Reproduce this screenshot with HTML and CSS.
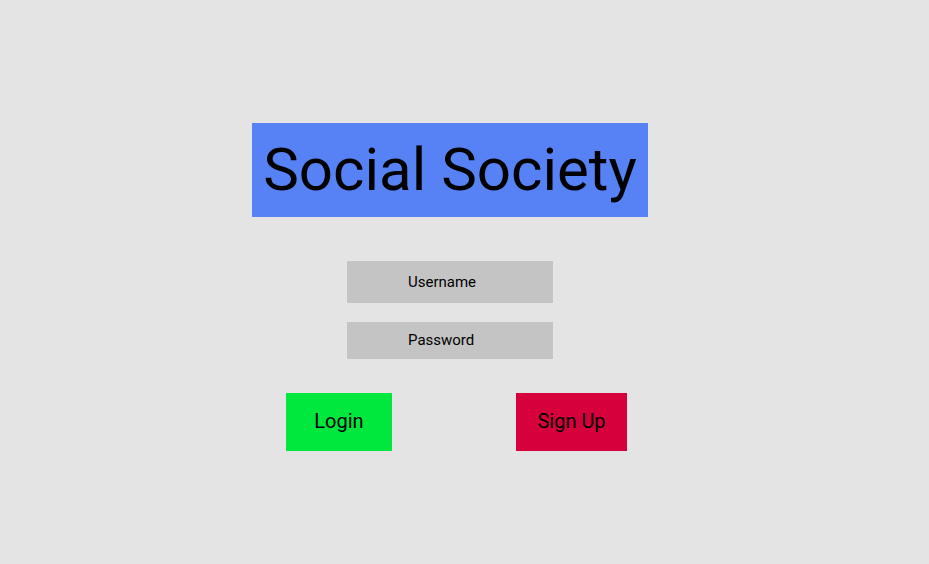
FILE: index.html
```html
<!DOCTYPE html>
<html>
<head>
<meta charset="utf-8">
<link rel="stylesheet" href="styles.css">
</head>
<body>
<main class="login">
  <h1 class="title">Social Society</h1>
  <div class="field field-user">Username</div>
  <div class="field field-pass">Password</div>
  <div class="actions">
    <button class="btn btn-login">Login</button>
    <button class="btn btn-signup">Sign Up</button>
  </div>
</main>
</body>
</html>
```
FILE: styles.css
```css
html, body {
  margin: 0;
  padding: 0;
  background: #e4e4e4;
  height: 100%;
}
body {
  font-family: Roboto, "Liberation Sans", sans-serif;
  color: #000;
}
.login {
  display: flex;
  flex-direction: column;
  align-items: center;
  width: 396px;
  margin-left: 252px;
  padding-top: 123px;
}
.title {
  margin: 0;
  width: 396px;
  height: 94px;
  box-sizing: border-box;
  background: #5782f5;
  font-weight: 400;
  font-size: 60px;
  line-height: 94px;
  text-align: center;
}
.field {
  width: 206px;
  box-sizing: border-box;
  background: #c4c4c4;
  padding-left: 61px;
  font-size: 15px;
  display: flex;
  align-items: center;
}
.field-user {
  margin-top: 44px;
  height: 42px;
}
.field-pass {
  margin-top: 19px;
  height: 37px;
  padding-bottom: 2px;
}
.actions {
  align-self: flex-start;
  margin-left: 34px;
  margin-top: 34px;
  display: flex;
  gap: 124px;
}
.btn {
  border: none;
  margin: 0;
  padding: 0 0 2px;
  height: 58px;
  font-family: Roboto, "Liberation Sans", sans-serif;
  font-size: 20px;
  color: #000;
}
.btn-login {
  width: 106px;
  background: #00e83e;
}
.btn-signup {
  width: 111px;
  background: #d6003c;
}
```
